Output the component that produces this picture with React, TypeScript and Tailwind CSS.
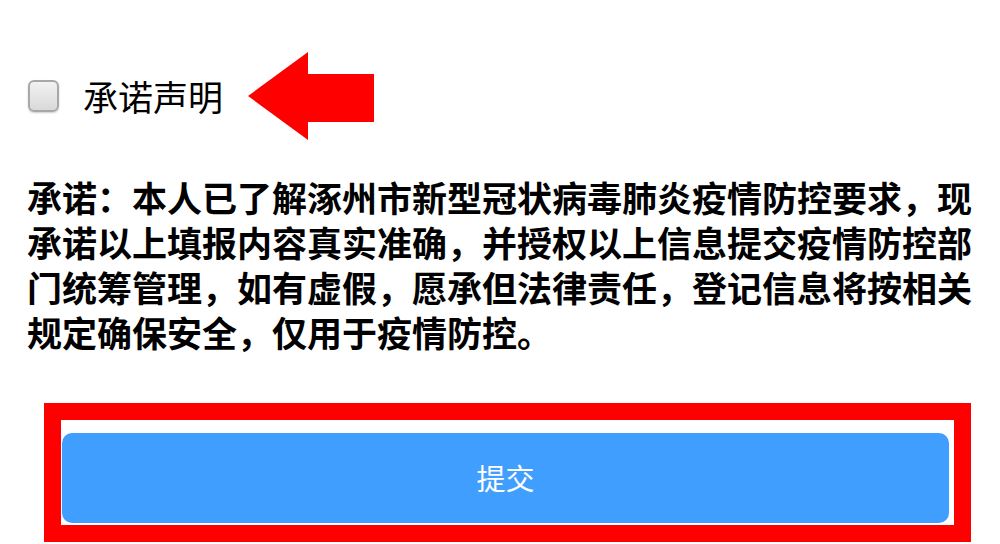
import React from "react";

const lines = [
  "承诺：本人已了解涿州市新型冠状病毒肺炎疫情防控要求，现",
  "承诺以上填报内容真实准确，并授权以上信息提交疫情防控部",
  "门统筹管理，如有虚假，愿承但法律责任，登记信息将按相关",
  "规定确保安全，仅用于疫情防控。",
];

export default function App() {
  return (
    <div
      className="w-[1000px] h-[544px] overflow-hidden bg-white text-black"
      style={{ fontFamily: '"Noto Sans CJK SC", "Noto Sans", sans-serif' }}
    >
      <div className="pt-[52px] pl-[28px] flex items-center">
        <label className="flex items-center cursor-pointer">
          <span className="w-[31px] h-[32px] rounded-[6px] border-2 border-[#a8a8a8] bg-gradient-to-b from-[#f2f2f2] to-[#d9d9d9] shadow-[0_1px_2px_rgba(0,0,0,0.2)]" />
          <span className="ml-[24px] text-[35px] leading-[40px] font-normal">承诺声明</span>
        </label>
        <svg
          className="ml-[25px]"
          width="126"
          height="88"
          viewBox="0 0 126 88"
        >
          <polygon
            points="0,44 60,0 60,22 126,22 126,70 60,70 60,88"
            fill="#ff0000"
          />
        </svg>
      </div>

      <p className="mt-[34px] ml-[27px] w-[950px] text-[35px] leading-[45px] font-bold">
        {lines.map((l, i) => (
          <span key={i} className="block whitespace-nowrap">
            {l}
          </span>
        ))}
      </p>

      <div className="mt-[49px] ml-[44px] w-[927px] border-[17px] border-[#ff0000] pt-[13px] pl-[1px] pr-[5px] pb-[2px]">
        <button className="w-full h-[90px] rounded-[10px] bg-[#409eff] text-white text-[29px] font-normal flex items-center justify-center">
          提交
        </button>
      </div>
    </div>
  );
}
